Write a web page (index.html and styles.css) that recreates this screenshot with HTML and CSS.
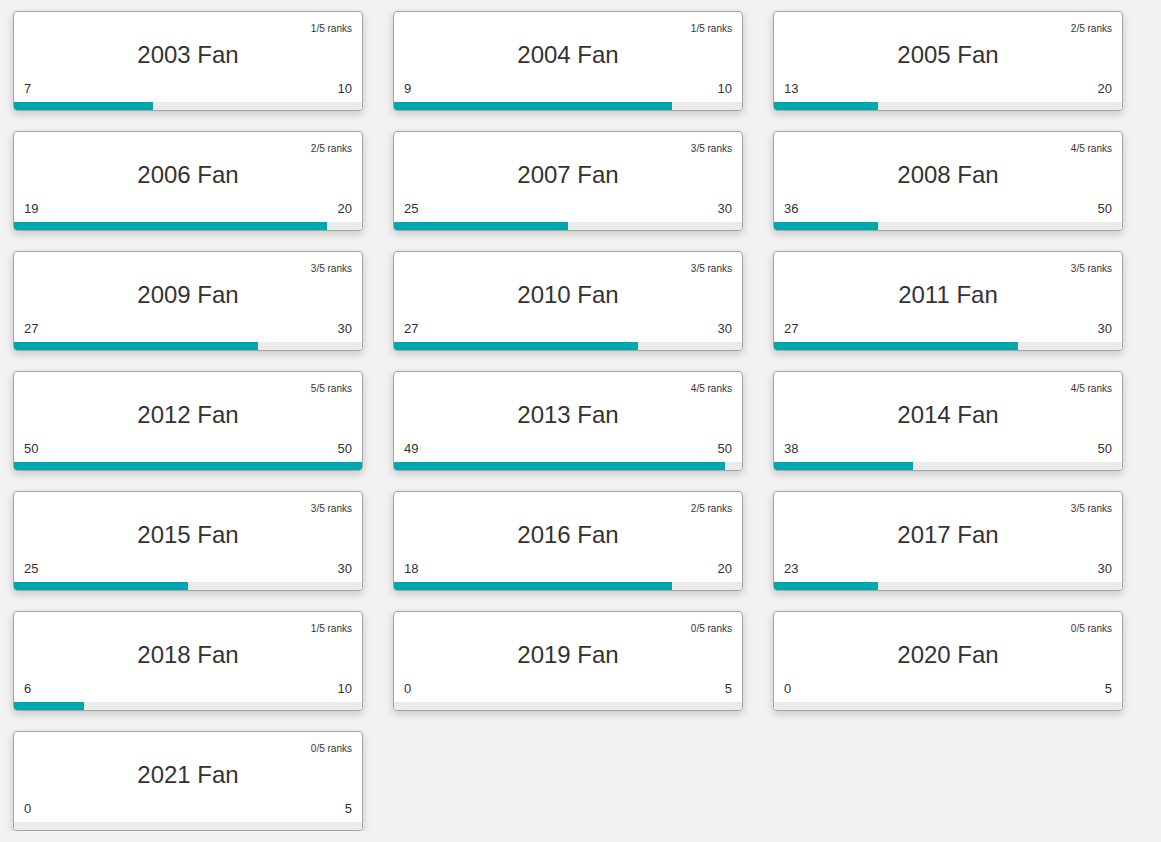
FILE: index.html
```html
<!DOCTYPE html>
<html>
<head>
<meta charset="utf-8">
<link rel="stylesheet" href="styles.css">
</head>
<body>
<div class="grid">
  <div class="card"><div class="ranks">1/5 ranks</div><div class="title">2003 Fan</div><div class="nums"><span>7</span><span>10</span></div><div class="track"><div class="fill" style="width:40%"></div></div></div>
  <div class="card"><div class="ranks">1/5 ranks</div><div class="title">2004 Fan</div><div class="nums"><span>9</span><span>10</span></div><div class="track"><div class="fill" style="width:80%"></div></div></div>
  <div class="card"><div class="ranks">2/5 ranks</div><div class="title">2005 Fan</div><div class="nums"><span>13</span><span>20</span></div><div class="track"><div class="fill" style="width:30%"></div></div></div>
  <div class="card"><div class="ranks">2/5 ranks</div><div class="title">2006 Fan</div><div class="nums"><span>19</span><span>20</span></div><div class="track"><div class="fill" style="width:90%"></div></div></div>
  <div class="card"><div class="ranks">3/5 ranks</div><div class="title">2007 Fan</div><div class="nums"><span>25</span><span>30</span></div><div class="track"><div class="fill" style="width:50%"></div></div></div>
  <div class="card"><div class="ranks">4/5 ranks</div><div class="title">2008 Fan</div><div class="nums"><span>36</span><span>50</span></div><div class="track"><div class="fill" style="width:30%"></div></div></div>
  <div class="card"><div class="ranks">3/5 ranks</div><div class="title">2009 Fan</div><div class="nums"><span>27</span><span>30</span></div><div class="track"><div class="fill" style="width:70%"></div></div></div>
  <div class="card"><div class="ranks">3/5 ranks</div><div class="title">2010 Fan</div><div class="nums"><span>27</span><span>30</span></div><div class="track"><div class="fill" style="width:70%"></div></div></div>
  <div class="card"><div class="ranks">3/5 ranks</div><div class="title">2011 Fan</div><div class="nums"><span>27</span><span>30</span></div><div class="track"><div class="fill" style="width:70%"></div></div></div>
  <div class="card"><div class="ranks">5/5 ranks</div><div class="title">2012 Fan</div><div class="nums"><span>50</span><span>50</span></div><div class="track"><div class="fill" style="width:100%"></div></div></div>
  <div class="card"><div class="ranks">4/5 ranks</div><div class="title">2013 Fan</div><div class="nums"><span>49</span><span>50</span></div><div class="track"><div class="fill" style="width:95%"></div></div></div>
  <div class="card"><div class="ranks">4/5 ranks</div><div class="title">2014 Fan</div><div class="nums"><span>38</span><span>50</span></div><div class="track"><div class="fill" style="width:40%"></div></div></div>
  <div class="card"><div class="ranks">3/5 ranks</div><div class="title">2015 Fan</div><div class="nums"><span>25</span><span>30</span></div><div class="track"><div class="fill" style="width:50%"></div></div></div>
  <div class="card"><div class="ranks">2/5 ranks</div><div class="title">2016 Fan</div><div class="nums"><span>18</span><span>20</span></div><div class="track"><div class="fill" style="width:80%"></div></div></div>
  <div class="card"><div class="ranks">3/5 ranks</div><div class="title">2017 Fan</div><div class="nums"><span>23</span><span>30</span></div><div class="track"><div class="fill" style="width:30%"></div></div></div>
  <div class="card"><div class="ranks">1/5 ranks</div><div class="title">2018 Fan</div><div class="nums"><span>6</span><span>10</span></div><div class="track"><div class="fill" style="width:20%"></div></div></div>
  <div class="card"><div class="ranks">0/5 ranks</div><div class="title">2019 Fan</div><div class="nums"><span>0</span><span>5</span></div><div class="track"><div class="fill" style="width:0%"></div></div></div>
  <div class="card"><div class="ranks">0/5 ranks</div><div class="title">2020 Fan</div><div class="nums"><span>0</span><span>5</span></div><div class="track"><div class="fill" style="width:0%"></div></div></div>
  <div class="card"><div class="ranks">0/5 ranks</div><div class="title">2021 Fan</div><div class="nums"><span>0</span><span>5</span></div><div class="track"><div class="fill" style="width:0%"></div></div></div>
</div>
</body>
</html>
```
FILE: styles.css
```css
html, body {
  margin: 0;
  padding: 0;
  background: #f2f2f2;
  font-family: "Liberation Sans", Arial, sans-serif;
  color: #333;
}
.grid {
  display: grid;
  grid-template-columns: repeat(3, 350px);
  column-gap: 30px;
  row-gap: 20px;
  padding: 11px 0 0 13px;
}
.card {
  background: #fff;
  border: 1px solid #a6a6a6;
  border-radius: 4px;
  box-shadow: 0 3px 8px rgba(0, 0, 0, 0.18);
  overflow: hidden;
  display: flex;
  flex-direction: column;
  height: 98px;
}
.ranks {
  font-size: 10px;
  line-height: 12px;
  text-align: right;
  padding: 11px 10px 0 0;
}
.title {
  font-size: 24px;
  line-height: 28px;
  text-align: center;
  margin-top: 6px;
}
.nums {
  display: flex;
  justify-content: space-between;
  font-size: 13px;
  line-height: 16px;
  padding: 0 10px;
  margin-top: 12px;
}
.track {
  margin-top: 5px;
  height: 8px;
  background: #ebebeb;
}
.fill {
  height: 100%;
  background: #00a8ae;
}
```
